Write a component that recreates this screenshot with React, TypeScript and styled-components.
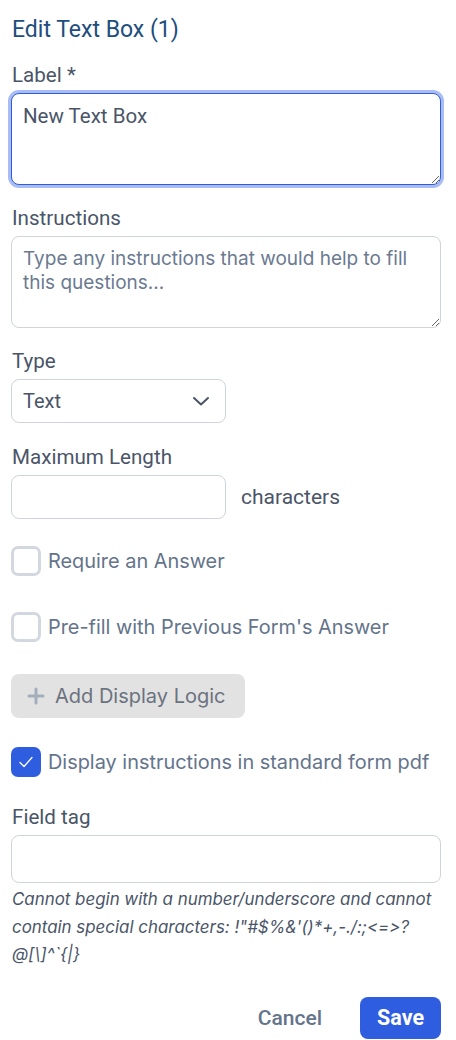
import React, { useEffect, useRef, useState } from "react";
import styled, { createGlobalStyle } from "styled-components";

const GlobalStyle = createGlobalStyle`
  html, body {
    margin: 0;
    padding: 0;
    background: #ffffff;
  }
  * {
    box-sizing: border-box;
  }
`;

const HELP_TEXT =
  "Cannot begin with a number/underscore and cannot contain special characters: !\"#$%&'()*+,-./:;<=>? @[\\]^`{|}";

const StyledPanel = styled.div`
  width: 456px;
  padding: 18px 15px 0 11px;
  display: flex;
  flex-direction: column;
  font-family: Roboto, "Liberation Sans", sans-serif;
`;

const StyledTitle = styled.h2`
  margin: 0 0 0 1px;
  font-size: 23px;
  line-height: 24px;
  font-weight: 400;
  color: #1d4e7d;
`;

const StyledField = styled.div<{ top: number }>`
  display: flex;
  flex-direction: column;
  gap: 6px;
  margin-top: ${({ top }) => top}px;
`;

const StyledLabel = styled.label`
  font-size: 20.6px;
  line-height: 24px;
  color: #4a5568;
  padding-left: 1px;
`;

const StyledTextArea = styled.textarea<{ focused?: boolean }>`
  width: 100%;
  height: 92px;
  padding: 10px 11px;
  border-radius: 8px;
  font-family: ${({ focused }) =>
    focused ? 'Roboto, "Liberation Sans", sans-serif' : 'Inter, "Noto Sans", sans-serif'};
  font-size: ${({ focused }) => (focused ? "20.5px" : "19px")};
  line-height: 24px;
  color: #4a5568;
  border: 1px solid ${({ focused }) => (focused ? "#2f5de0" : "#cfd3db")};
  box-shadow: ${({ focused }) => (focused ? "0 0 0 3px #a9bcf3" : "none")};
  outline: none;
  resize: vertical;
  caret-color: #2d3748;

  &::placeholder {
    color: #6b7a90;
  }
`;

const StyledSelectWrap = styled.div`
  position: relative;
  width: 215px;
`;

const StyledSelect = styled.select`
  appearance: none;
  width: 100%;
  height: 44px;
  padding: 0 11px;
  border: 1px solid #cfd3db;
  border-radius: 8px;
  background: #ffffff;
  font-family: Roboto, "Liberation Sans", sans-serif;
  font-size: 20px;
  color: #4a5568;
  outline: none;
`;

const StyledChevron = styled.svg`
  position: absolute;
  right: 16px;
  top: 16px;
  pointer-events: none;
`;

const StyledInlineRow = styled.div`
  display: flex;
  align-items: center;
  gap: 15px;
`;

const StyledInput = styled.input<{ wide?: boolean }>`
  width: ${({ wide }) => (wide ? "100%" : "215px")};
  height: ${({ wide }) => (wide ? "48px" : "44px")};
  padding: 0 11px;
  border: 1px solid #cfd3db;
  border-radius: 8px;
  font-family: Roboto, "Liberation Sans", sans-serif;
  font-size: 20px;
  color: #4a5568;
  outline: none;
`;

const StyledSuffix = styled.span`
  font-size: 21px;
  color: #4a5568;
`;

const StyledCheckRow = styled.label<{ top: number }>`
  display: flex;
  align-items: center;
  gap: 7px;
  margin-top: ${({ top }) => top}px;
  cursor: pointer;
`;

const StyledBox = styled.span<{ checked: boolean }>`
  width: 30px;
  height: 30px;
  border-radius: 7px;
  display: flex;
  align-items: center;
  justify-content: center;
  background: ${({ checked }) => (checked ? "#2f5de0" : "#ffffff")};
  border: ${({ checked }) => (checked ? "none" : "3px solid #d3d8e0")};
  flex-shrink: 0;
`;

const StyledCheckText = styled.span`
  font-family: Inter, "Noto Sans", sans-serif;
  font-size: 19.9px;
  color: #64748b;
`;

const StyledLogicButton = styled.button`
  margin-top: 32px;
  align-self: flex-start;
  width: 234px;
  height: 44px;
  border: none;
  border-radius: 8px;
  background: #e2e2e2;
  display: flex;
  align-items: center;
  gap: 10px;
  padding: 0 0 0 16px;
  font-family: Inter, "Noto Sans", sans-serif;
  font-size: 20px;
  color: #6b7280;
`;

const StyledHelp = styled.p`
  margin: 3px 0 0 1px;
  font-family: Inter, "Noto Sans", sans-serif;
  font-style: italic;
  font-size: 16.9px;
  line-height: 27.5px;
  color: #4a5568;
  font-feature-settings: "calt" 0, "liga" 0;
`;

const StyledFooter = styled.div`
  margin-top: 28px;
  display: flex;
  justify-content: flex-end;
  align-items: center;
  gap: 38px;
`;

const StyledAction = styled.button<{ primary?: boolean }>`
  height: 42px;
  padding: ${({ primary }) => (primary ? "0 17px" : "0")};
  border: none;
  border-radius: 8px;
  background: ${({ primary }) => (primary ? "#2f5de0" : "transparent")};
  color: ${({ primary }) => (primary ? "#ffffff" : "#64748b")};
  font-family: Roboto, "Liberation Sans", sans-serif;
  font-size: ${({ primary }) => (primary ? "21.5px" : "21px")};
  font-weight: ${({ primary }) => (primary ? 700 : 500)};
`;

const Checkbox = ({
  label,
  checked,
  top,
  onChange,
}: {
  label: string;
  checked: boolean;
  top: number;
  onChange: () => void;
}) => (
  <StyledCheckRow top={top} onClick={onChange}>
    <StyledBox checked={checked}>
      {checked && (
        <svg width="16" height="12" viewBox="0 0 16 12">
          <path d="M2 6.5l4 4 8-9" fill="none" stroke="#ffffff" strokeWidth="1.3" strokeLinecap="round" strokeLinejoin="round" />
        </svg>
      )}
    </StyledBox>
    <StyledCheckText>{label}</StyledCheckText>
  </StyledCheckRow>
);

export default function App() {
  const [label, setLabel] = useState("New Text Box");
  const [required, setRequired] = useState(false);
  const [prefill, setPrefill] = useState(false);
  const [showPdf, setShowPdf] = useState(true);
  const labelRef = useRef<HTMLTextAreaElement>(null);

  useEffect(() => {
    const el = labelRef.current;
    if (el) {
      el.focus();
      el.setSelectionRange(el.value.length, el.value.length);
    }
  }, []);

  return (
    <>
      <GlobalStyle />
      <StyledPanel>
        <StyledTitle>Edit Text Box (1)</StyledTitle>

        <StyledField top={21}>
          <StyledLabel>Label *</StyledLabel>
          <StyledTextArea
            ref={labelRef}
            focused
            value={label}
            onChange={(e) => setLabel(e.target.value)}
          />
        </StyledField>

        <StyledField top={21}>
          <StyledLabel>Instructions</StyledLabel>
          <StyledTextArea placeholder="Type any instructions that would help to fill this questions..." />
        </StyledField>

        <StyledField top={21}>
          <StyledLabel>Type</StyledLabel>
          <StyledSelectWrap>
            <StyledSelect defaultValue="text">
              <option value="text">Text</option>
            </StyledSelect>
            <StyledChevron width="18" height="12" viewBox="0 0 18 12">
              <path d="M2 3l7 6.5L16 3" fill="none" stroke="#4a5568" strokeWidth="2" strokeLinecap="round" strokeLinejoin="round" />
            </StyledChevron>
          </StyledSelectWrap>
        </StyledField>

        <StyledField top={22}>
          <StyledLabel>Maximum Length</StyledLabel>
          <StyledInlineRow>
            <StyledInput />
            <StyledSuffix>characters</StyledSuffix>
          </StyledInlineRow>
        </StyledField>

        <Checkbox label="Require an Answer" checked={required} top={27} onChange={() => setRequired(!required)} />
        <Checkbox label="Pre-fill with Previous Form's Answer" checked={prefill} top={36} onChange={() => setPrefill(!prefill)} />

        <StyledLogicButton type="button">
          <svg width="18" height="18" viewBox="0 0 18 18">
            <path d="M9 2v14M2 9h14" stroke="#a3adbb" strokeWidth="3" strokeLinecap="round" />
          </svg>
          Add Display Logic
        </StyledLogicButton>

        <Checkbox label="Display instructions in standard form pdf" checked={showPdf} top={29} onChange={() => setShowPdf(!showPdf)} />

        <StyledField top={28}>
          <StyledLabel>Field tag</StyledLabel>
          <StyledInput wide />
        </StyledField>

        <StyledHelp>{HELP_TEXT}</StyledHelp>

        <StyledFooter>
          <StyledAction type="button">Cancel</StyledAction>
          <StyledAction type="button" primary>
            Save
          </StyledAction>
        </StyledFooter>
      </StyledPanel>
    </>
  );
}
